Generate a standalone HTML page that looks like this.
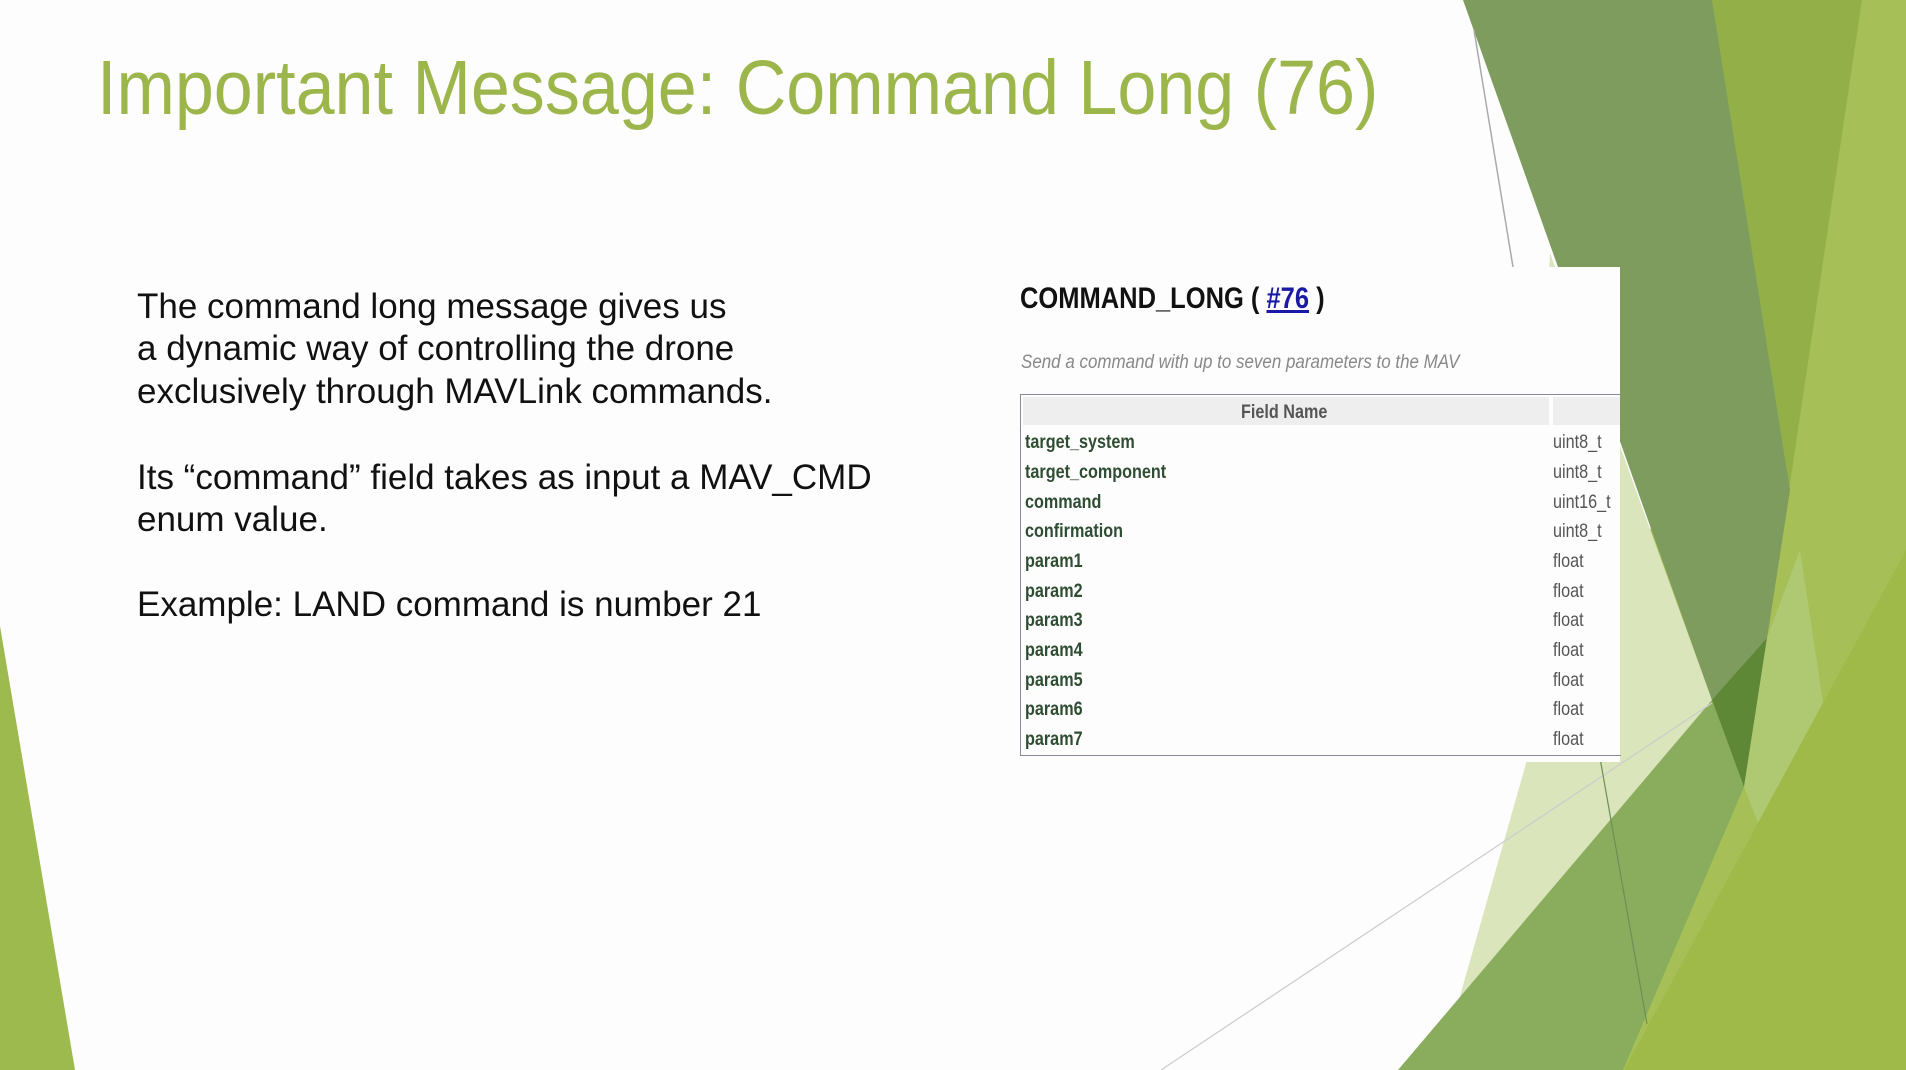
<!DOCTYPE html>
<html><head><meta charset="utf-8"><style>
html,body{margin:0;padding:0}
body{width:1906px;height:1070px;position:relative;overflow:hidden;background:#fdfdfd;font-family:"Liberation Sans",Arial,sans-serif}
.a{position:absolute;white-space:nowrap}
.t{left:97px;top:50px;font-size:77px;color:#9cb64c;line-height:1;transform:scaleX(0.91);transform-origin:0 0}
.b{left:137px;font-size:35px;color:#111;line-height:1}
.n{transform:scaleX(0.83);transform-origin:0 0}
.r{font-size:19.5px;line-height:1}
.nm{left:1025px;font-weight:bold;color:#2f4d33}
.ty{left:1553px;color:#555}
</style></head><body>
<svg class="a" style="left:0;top:0" width="1906" height="1070">
<polygon points="0,626 75,1070 0,1070" fill="#9dba4e"/>
<polygon points="1700,0 1906,0 1906,1070 1600,1070" fill="#a6c057"/>
<polygon points="1712,0 1862,0 1767,638 1790,490" fill="#93af48"/>
<polygon points="1550,253 1712,700 1600,900 1439,1070 1527,760" fill="#dbe5bc"/>
<polygon points="1463,0 1712,0 1790,490 1744,787 1712,700" fill="#7e9c5e"/>
<polygon points="1712,700 1767,638 1744,787" fill="#5e8736"/>
<polygon points="1744,787 1767,638 1800,550 1823,703 1758,823" fill="#afc872"/>
<polygon points="1398,1070 1712,700 1744,787 1623,1070" fill="#89ad5c"/>
<polygon points="1624,1070 1906,550 1906,1070" fill="#9fba48"/>
<line x1="1474" y1="30" x2="1513" y2="267" stroke="#aaa" stroke-width="1.5"/>
<line x1="1161" y1="1070" x2="1712" y2="703" stroke="#ccc" stroke-width="1.2"/>
<line x1="1600" y1="758" x2="1647" y2="1024" stroke="#6f8d55" stroke-width="1.2"/>
</svg>
<div class="a t">Important Message: Command Long (76)</div>
<div class="a b" style="top:289px">The command long message gives us</div>
<div class="a b" style="top:331px">a dynamic way of controlling the drone</div>
<div class="a b" style="top:374px">exclusively through MAVLink commands.</div>
<div class="a b" style="top:460px">Its “command” field takes as input a MAV_CMD</div>
<div class="a b" style="top:502px">enum value.</div>
<div class="a b" style="top:587px">Example: LAND command is number 21</div>

<div class="a" style="left:1000px;top:267px;width:620px;height:495px;background:#fdfdfd"></div>
<div class="a" style="left:1020px;top:282px;font-size:30px;font-weight:bold;color:#111;transform:scaleX(0.85);transform-origin:0 0">COMMAND_LONG ( <span style="color:#1a1aa6;text-decoration:underline">#76</span> )</div>
<div class="a" style="left:1021px;top:351px;font-size:19.5px;font-style:italic;color:#888;transform:scaleX(0.87);transform-origin:0 0">Send a command with up to seven parameters to the MAV</div>
<div class="a" style="left:1020px;top:394px;width:600px;height:360px;border:1.5px solid #8a8a96;border-right:none"></div>
<div class="a" style="left:1023px;top:397px;width:526px;height:28px;background:#eeeeee"></div>
<div class="a" style="left:1553px;top:397px;width:67px;height:28px;background:#eeeeee"></div>
<div class="a n r" style="left:1241px;top:403px;font-weight:bold;color:#555">Field Name</div>
<div class="a n r nm" style="top:433px">target_system</div><div class="a n r ty" style="top:433px">uint8_t</div>
<div class="a n r nm" style="top:463px">target_component</div><div class="a n r ty" style="top:463px">uint8_t</div>
<div class="a n r nm" style="top:493px">command</div><div class="a n r ty" style="top:493px">uint16_t</div>
<div class="a n r nm" style="top:522px">confirmation</div><div class="a n r ty" style="top:522px">uint8_t</div>
<div class="a n r nm" style="top:552px">param1</div><div class="a n r ty" style="top:552px">float</div>
<div class="a n r nm" style="top:582px">param2</div><div class="a n r ty" style="top:582px">float</div>
<div class="a n r nm" style="top:611px">param3</div><div class="a n r ty" style="top:611px">float</div>
<div class="a n r nm" style="top:641px">param4</div><div class="a n r ty" style="top:641px">float</div>
<div class="a n r nm" style="top:671px">param5</div><div class="a n r ty" style="top:671px">float</div>
<div class="a n r nm" style="top:700px">param6</div><div class="a n r ty" style="top:700px">float</div>
<div class="a n r nm" style="top:730px">param7</div><div class="a n r ty" style="top:730px">float</div>
</body></html>
